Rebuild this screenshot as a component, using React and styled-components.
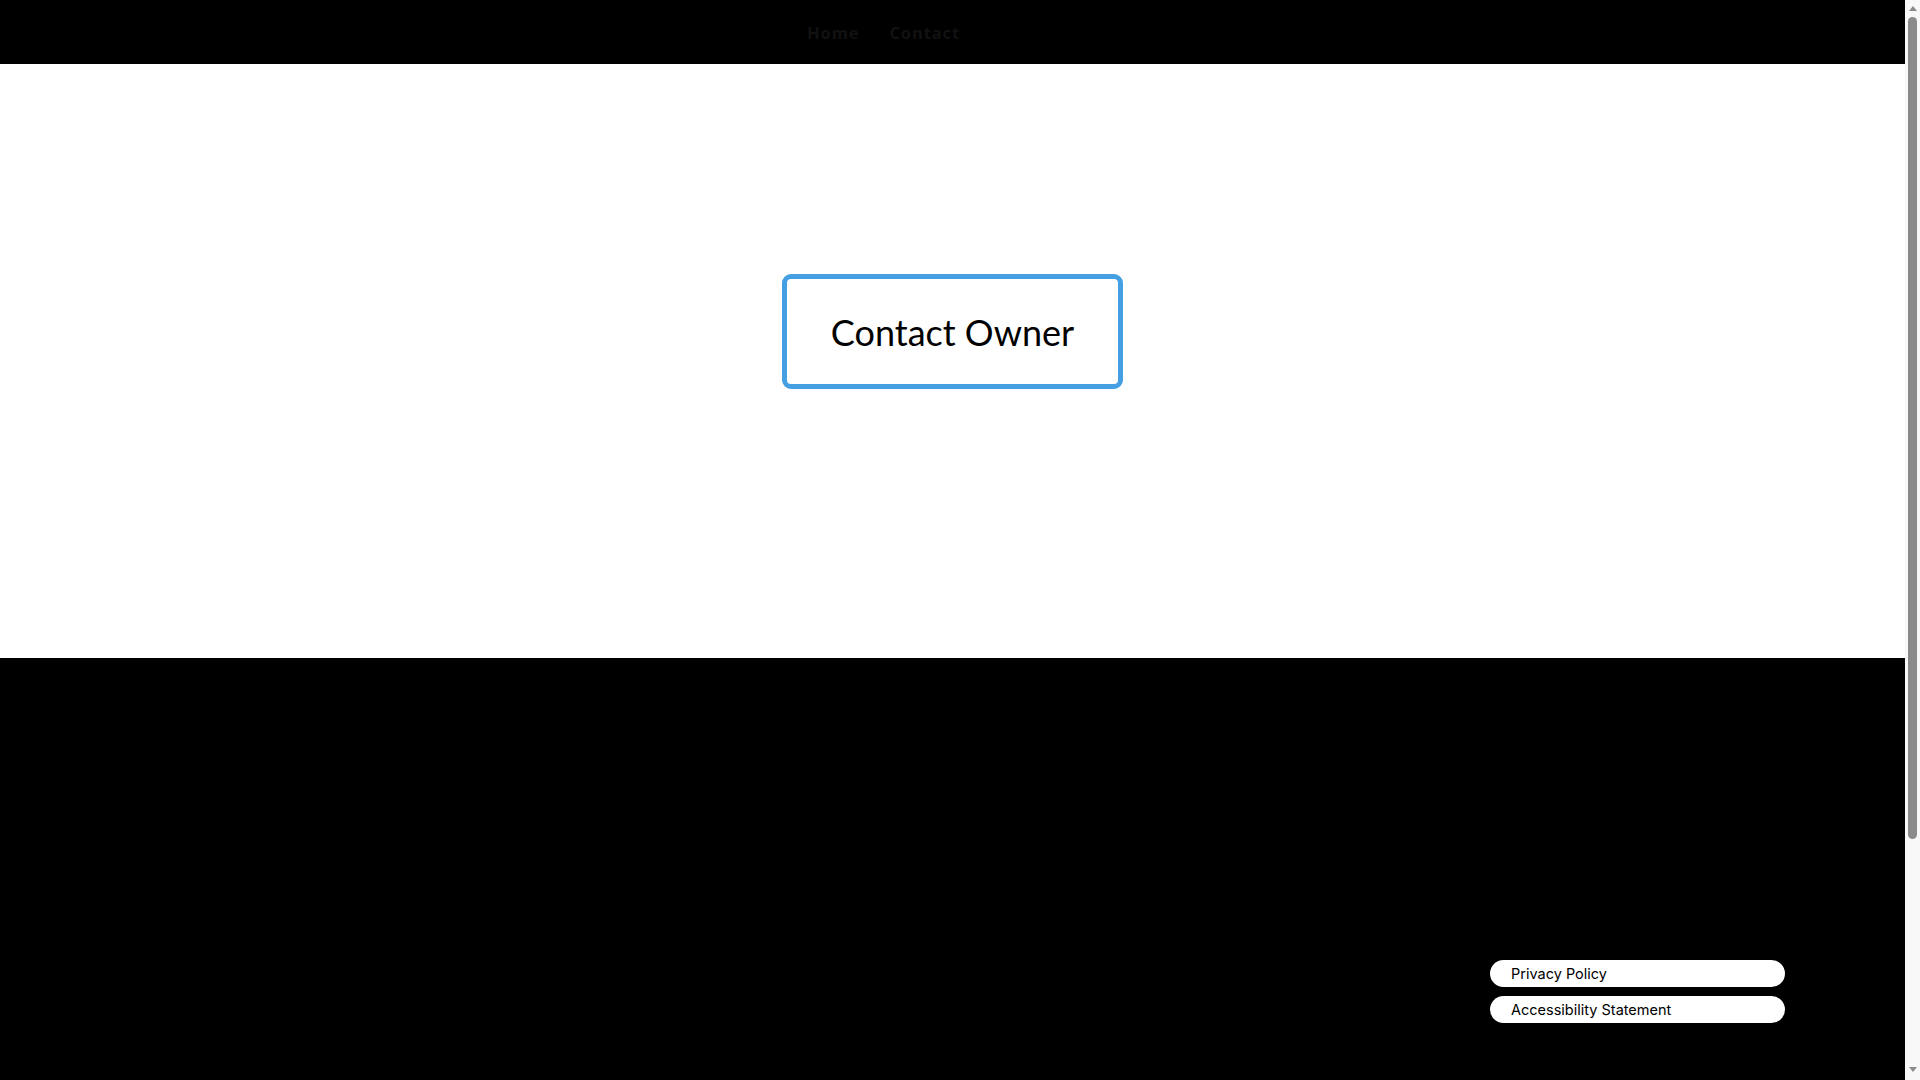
import styled, { createGlobalStyle } from "styled-components";

const GlobalStyle = createGlobalStyle`
    html, body {
        margin: 0;
        padding: 0;
        background: #ffffff;
        overflow: hidden;
    }

    * {
        box-sizing: border-box;
    }
`;

const Viewport = styled.div`
    display: flex;
    height: 100vh;
    overflow: hidden;
`;

const Page = styled.div`
    flex: 1;
    min-width: 0;
    overflow: hidden;
`;

const Header = styled.header`
    height: 64px;
    background: #000000;
    display: flex;
    align-items: center;
    padding-left: 807px;
    gap: 30px;
`;

const NavLink = styled.a`
    font-family: "Open Sans", "Liberation Sans", sans-serif;
    font-weight: 700;
    font-size: 16.5px;
    letter-spacing: 0.9px;
    color: #111111;
    text-decoration: none;
`;

const Hero = styled.section`
    height: 594px;
    background: #ffffff;
    display: flex;
    justify-content: center;
    align-items: flex-start;
    padding-top: 210px;
`;

const OwnerButton = styled.button`
    width: 341px;
    height: 115px;
    border: 5px solid #449fe3;
    border-radius: 9px;
    background: #ffffff;
    font-family: Lato, "Liberation Sans", sans-serif;
    font-size: 36px;
    font-weight: 400;
    color: #000000;
    cursor: pointer;
    padding: 0;
`;

const Footer = styled.footer`
    height: 737px;
    background: #000000;
    display: flex;
    flex-direction: column;
    align-items: flex-end;
    gap: 9px;
    padding-top: 302px;
    padding-right: 120px;
`;

const Pill = styled.a`
    width: 295px;
    height: 27px;
    border-radius: 14px;
    background: #ffffff;
    color: #000000;
    font-family: Inter, "Liberation Sans", sans-serif;
    font-size: 14.5px;
    display: flex;
    align-items: center;
    padding-left: 21px;
    text-decoration: none;
`;

/* browser scrollbar, drawn since the headless window hides it */
const ScrollRail = styled.div`
    width: 15px;
    flex-shrink: 0;
    background: #f8f8f8;
    display: flex;
    flex-direction: column;
    align-items: center;
    padding: 6px 0 8px;
`;

const Arrow = styled.span`
    width: 0;
    height: 0;
    border-left: 4px solid transparent;
    border-right: 4px solid transparent;
    ${({ $down }) =>
        $down
            ? "border-top: 5px solid #8a8a8a; margin-top: auto;"
            : "border-bottom: 5px solid #8a8a8a;"}
`;

const Thumb = styled.div`
    width: 9px;
    height: 822px;
    margin-top: 6px;
    border-radius: 5px;
    background: #8a8a8a;
`;

export default function App() {
    return (
        <>
            <GlobalStyle />
            <Viewport>
                <Page>
                    <Header>
                        <NavLink href="#">Home</NavLink>
                        <NavLink href="#">Contact</NavLink>
                    </Header>
                    <Hero>
                        <OwnerButton>Contact Owner</OwnerButton>
                    </Hero>
                    <Footer>
                        <Pill href="#">Privacy Policy</Pill>
                        <Pill href="#">Accessibility Statement</Pill>
                    </Footer>
                </Page>
                <ScrollRail>
                    <Arrow />
                    <Thumb />
                    <Arrow $down />
                </ScrollRail>
            </Viewport>
        </>
    );
}
